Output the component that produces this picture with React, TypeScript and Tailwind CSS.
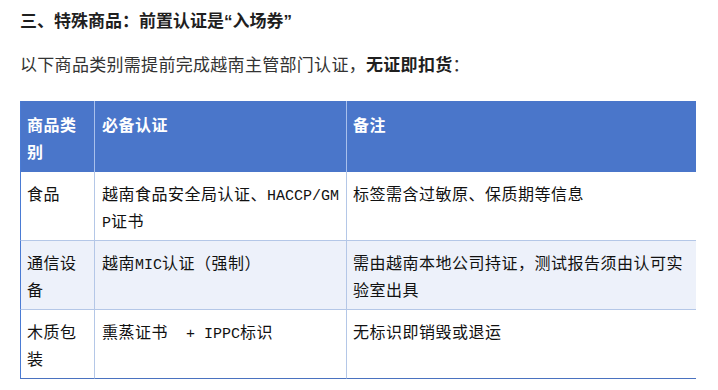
import React from "react";

const M = ({ children }: { children: React.ReactNode }) => (
  <span className="font-['Liberation_Mono',monospace] text-[15px] leading-none tracking-normal whitespace-pre">{children}</span>
);

export default function App() {
  const th = "bg-[#4a76ca] text-white font-bold text-left align-top pt-[10px] pb-[7px] leading-[27px]";
  const td = "align-top pt-2 pb-1.5 leading-[27px] text-[#111]";
  return (
    <div className="w-[718px] h-[390px] bg-white px-5 pt-[8px] font-['Noto_Sans_CJK_SC',sans-serif]">
      <h3 className="text-[17px] leading-[28px] font-bold text-[#1f1f1f] font-['Liberation_Sans','Noto_Sans_CJK_SC',sans-serif]">
        三、特殊商品：前置认证是“入场券”
      </h3>
      <p className="mt-[16px] text-[17px] tracking-[0.3px] leading-[28px] text-[#333] font-['Liberation_Sans','Noto_Sans_CJK_SC',sans-serif]">
        以下商品类别需提前完成越南主管部门认证，<strong className="font-bold text-[#1f1f1f]">无证即扣货</strong>：
      </p>
      <table className="mt-[21px] w-[676px] border-separate border-spacing-0 text-[16px] tracking-[0.5px] table-fixed">
        <colgroup>
          <col className="w-[75px]" />
          <col className="w-[252px]" />
          <col className="w-[349px]" />
        </colgroup>
        <thead>
          <tr>
            <th className={`${th} border-l border-[#4a7bd4] pl-[6px] border-r border-r-[#a9c0ec]`}>
              商品类<br />别
            </th>
            <th className={`${th} pl-[7px] border-r border-r-[#a9c0ec]`}>必备认证</th>
            <th className={`${th} pl-[6px]`}>备注</th>
          </tr>
        </thead>
        <tbody>
          <tr className="bg-white">
            <td className={`${td} pl-[6px] border-l border-l-[#4a7bd4] border-r border-r-[#b4c7e7] border-b border-b-[#b4c7e7]`}>
              食品
            </td>
            <td className={`${td} pl-[7px] border-r border-r-[#b4c7e7] border-b border-b-[#b4c7e7]`}>
              越南食品安全局认证、<M>HACCP/GM</M>
              <br />
              <M>P</M>证书
            </td>
            <td className={`${td} pl-[6px] border-b border-b-[#b4c7e7]`}>标签需含过敏原、保质期等信息</td>
          </tr>
          <tr className="bg-[#edf1fa]">
            <td className={`${td} pl-[6px] border-l border-l-[#4a7bd4] border-r border-r-[#b4c7e7] border-b border-b-[#b4c7e7]`}>
              通信设<br />备
            </td>
            <td className={`${td} pl-[7px] border-r border-r-[#b4c7e7] border-b border-b-[#b4c7e7]`}>
              越南<M>MIC</M>认证（强制）
            </td>
            <td className={`${td} pl-[6px] border-b border-b-[#b4c7e7]`}>
              需由越南本地公司持证，测试报告须由认可实
              <br />
              验室出具
            </td>
          </tr>
          <tr className="bg-white">
            <td className={`${td} pl-[6px] border-l border-l-[#4a7bd4] border-r border-r-[#b4c7e7] border-b border-b-[#4a72c0]`}>
              木质包<br />装
            </td>
            <td className={`${td} pl-[7px] border-r border-r-[#b4c7e7] border-b border-b-[#4a72c0]`}>
              熏蒸证书<M>{"  + IPPC"}</M>标识
            </td>
            <td className={`${td} pl-[6px] border-b border-b-[#4a72c0]`}>无标识即销毁或退运</td>
          </tr>
        </tbody>
      </table>
    </div>
  );
}
